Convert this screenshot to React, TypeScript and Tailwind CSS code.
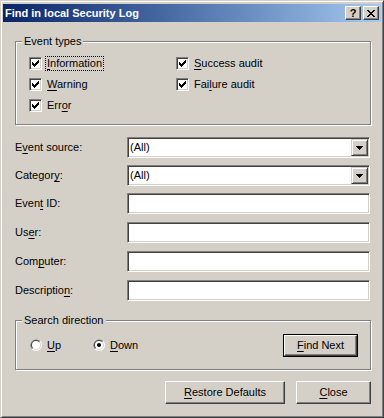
import React from 'react';

// Classic Win2k "Find" dialog of the Event Viewer

const sunken =
  'border border-t-[#808080] border-l-[#808080] border-b-white border-r-white shadow-[inset_1px_1px_0_#404040,inset_-1px_-1px_0_#d4d0c8]';
const raised =
  'border border-t-white border-l-white border-b-[#404040] border-r-[#404040] shadow-[inset_-1px_-1px_0_#808080]';

function Acc({ text, u }: { text: string; u: number }) {
  return (
    <>
      {text.slice(0, u)}
      <span className="underline underline-offset-[2px]">{text[u]}</span>
      {text.slice(u + 1)}
    </>
  );
}

function CheckMark() {
  const px: [number, number][] = [
    [6, 0], [5, 1], [6, 1], [0, 2], [4, 2], [5, 2], [6, 2],
    [0, 3], [1, 3], [3, 3], [4, 3], [5, 3],
    [0, 4], [1, 4], [2, 4], [3, 4], [4, 4],
    [1, 5], [2, 5], [3, 5], [2, 6],
  ];
  return (
    <svg width="7" height="7" viewBox="0 0 7 7" shapeRendering="crispEdges">
      {px.map(([x, y]) => (
        <rect key={`${x}-${y}`} x={x} y={y} width="1" height="1" fill="#000" />
      ))}
    </svg>
  );
}

function CloseGlyph() {
  const rows = ['XX....XX', '.XX..XX.', '..XXXX..', '...XX...', '..XXXX..', '.XX..XX.', 'XX....XX'];
  return (
    <svg width="8" height="7" viewBox="0 0 8 7" shapeRendering="crispEdges">
      {rows.flatMap((r, y) =>
        r.split('').map((c, x) => (c === 'X' ? <rect key={`${x}-${y}`} x={x} y={y} width="1" height="1" fill="#000" /> : null))
      )}
    </svg>
  );
}

function Checkbox({ label, u, focused }: { label: string; u: number; focused?: boolean }) {
  return (
    <div className="flex items-center h-[13px]">
      <div className={`w-[13px] h-[13px] bg-white flex items-center justify-center shrink-0 ${sunken}`}>
        <CheckMark />
      </div>
      <span
        className={`ml-[3px] px-[1px] leading-[13px] border ${
          focused ? 'border-dotted border-black' : 'border-transparent'
        }`}
      >
        <Acc text={label} u={u} />
      </span>
    </div>
  );
}

function Radio({ label, u, checked }: { label: string; u: number; checked?: boolean }) {
  return (
    <div className="flex items-center w-[63px]">
      <svg width="12" height="12" viewBox="0 0 12 12">
        <circle cx="6" cy="6" r="6" fill="#fff" />
        <path d="M10.24 1.76 A6 6 0 0 0 1.76 10.24 Z" fill="#808080" />
        <circle cx="6" cy="6" r="5" fill="#d4d0c8" />
        <path d="M9.54 2.46 A5 5 0 0 0 2.46 9.54 Z" fill="#404040" />
        <circle cx="6" cy="6" r="4" fill="#fff" />
        {checked && <circle cx="6" cy="6" r="2" fill="#000" />}
      </svg>
      <span className="ml-[5px]">
        <Acc text={label} u={u} />
      </span>
    </div>
  );
}

function Group({ title, className, children }: { title: string; className: string; children: React.ReactNode }) {
  return (
    <div className={`relative border border-[#808080] shadow-[inset_1px_1px_0_#fff,1px_1px_0_#fff] ${className}`}>
      <span className="absolute -top-[7px] left-[6px] px-[2px] bg-[#d4d0c8] leading-[13px]">{title}</span>
      {children}
    </div>
  );
}

function Combo() {
  return (
    <div className={`w-[243px] h-[21px] bg-white flex items-center justify-between ${sunken}`}>
      <span className="pl-[2px]">(All)</span>
      <div className="w-[17px] h-[17px] mr-px border border-t-[#d4d0c8] border-l-[#d4d0c8] border-b-[#404040] border-r-[#404040] bg-[#d4d0c8] shadow-[inset_1px_1px_0_#fff,inset_-1px_-1px_0_#808080] flex items-center justify-center">
        <svg width="7" height="4" viewBox="0 0 7 4" shapeRendering="crispEdges">
          <path d="M0 0h7v1H0zM1 1h5v1H1zM2 2h3v1H2zM3 3h1v1H3z" fill="#000" />
        </svg>
      </div>
    </div>
  );
}

function Field({ label, u, combo, className }: { label: string; u: number; combo?: boolean; className: string }) {
  return (
    <div className={`flex items-center ${className}`}>
      <span className="w-[112px]">
        <Acc text={label} u={u} />
      </span>
      {combo ? <Combo /> : <div className={`w-[243px] h-[21px] bg-white ${sunken}`} />}
    </div>
  );
}

function Button({ label, u, w, isDefault }: { label: string; u: number; w: string; isDefault?: boolean }) {
  const inner = (
    <div className={`h-full bg-[#d4d0c8] flex items-center justify-center ${raised}`}>
      <Acc text={label} u={u} />
    </div>
  );
  return isDefault ? (
    <div className={`${w} h-[23px] border border-black`}>{inner}</div>
  ) : (
    <div className={`${w} h-[23px]`}>{inner}</div>
  );
}

export default function App() {
  return (
    <div className="w-[384px] h-[418px] bg-[#d4d0c8] border border-t-[#d4d0c8] border-l-[#d4d0c8] border-b-[#404040] border-r-[#404040] shadow-[inset_1px_1px_0_#fff,inset_-1px_-1px_0_#808080] p-[2px] pt-[3px] flex flex-col text-[11px] text-black font-['Liberation_Sans',Arial,sans-serif] select-none">
      {/* Title bar */}
      <div className="h-[18px] bg-gradient-to-r from-[#0a246a] to-[#a6caf0] flex items-center justify-between pl-[2px] pr-[2px]">
        <span className="font-bold text-white">Find in local Security Log</span>
        <div className="flex gap-[2px]">
          <div className={`w-[16px] h-[14px] bg-[#d4d0c8] flex items-center justify-center font-bold text-[11px] leading-none ${raised}`}>
            ?
          </div>
          <div className={`w-[16px] h-[14px] bg-[#d4d0c8] flex items-center justify-center ${raised}`}>
            <CloseGlyph />
          </div>
        </div>
      </div>

      {/* Client area */}
      <div className="flex-1 flex flex-col pl-[12px] pr-[10px]">
        <Group title="Event types" className="mt-[19px] h-[84px] pt-[15px] pl-[13px]">
          <div className="grid grid-cols-[147px_1fr] gap-y-[8px]">
            <Checkbox label="Information" u={0} focused />
            <Checkbox label="Success audit" u={0} />
            <Checkbox label="Warning" u={0} />
            <Checkbox label="Failure audit" u={3} />
            <Checkbox label="Error" u={3} />
          </div>
        </Group>

        <Field label="Event source:" u={1} combo className="mt-[12px]" />
        <Field label="Category:" u={7} combo className="mt-[7px]" />
        <Field label="Event ID:" u={4} className="mt-[7px]" />
        <Field label="User:" u={2} className="mt-[8px]" />
        <Field label="Computer:" u={3} className="mt-[8px]" />
        <Field label="Description:" u={10} className="mt-[8px]" />

        <Group title="Search direction" className="mt-[19px] h-[50px] flex items-center pl-[14px] pr-[12px]">
          <Radio label="Up" u={0} />
          <Radio label="Down" u={0} checked />
          <div className="ml-auto">
            <Button label="Find Next" u={0} w="w-[75px]" isDefault />
          </div>
        </Group>

        <div className="mt-[11px] flex justify-end gap-[11px]">
          <Button label="Restore Defaults" u={0} w="w-[120px]" />
          <Button label="Close" u={0} w="w-[75px]" />
        </div>
      </div>
    </div>
  );
}
